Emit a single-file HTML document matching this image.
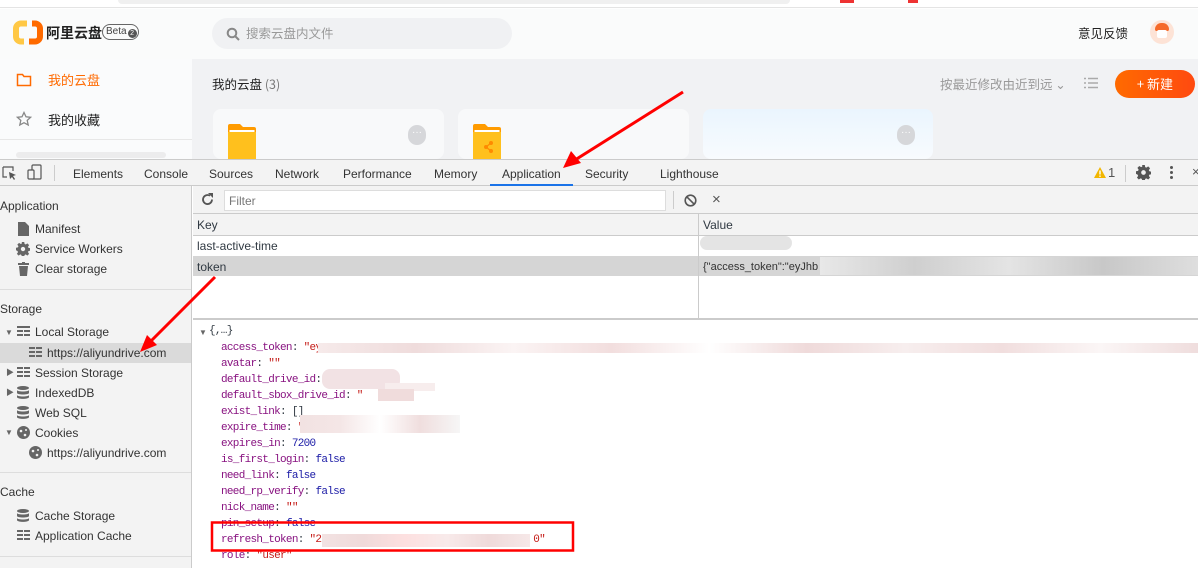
<!DOCTYPE html>
<html><head><meta charset="utf-8">
<style>
*{box-sizing:border-box;margin:0;padding:0}
body{width:1198px;height:568px;overflow:hidden;position:relative;background:#fff;font-family:"Liberation Sans","Noto Sans CJK SC",sans-serif;font-size:12px;color:#303942}
.abs{position:absolute}
.cjk{font-family:"Noto Sans CJK SC","Liberation Sans",sans-serif}
.mono{font-family:"Liberation Mono","DejaVu Sans Mono",monospace;font-size:11px;letter-spacing:-0.7px}
.tab{position:absolute;top:160px;height:27px;line-height:28px;font-size:12px;color:#333}
.si{position:absolute;left:0;height:20px;line-height:20px;font-size:12px;color:#333;white-space:nowrap}
.ln{position:absolute;left:221px;height:16px;line-height:16px;white-space:nowrap}
.k{color:#881280}
.s{color:#c41a16}
.b{color:#1a1aa6}
.blur{position:absolute;background:#f2dede}
</style></head><body>
<div class="abs" style="left:0;top:0;width:1198px;height:8px;background:#fff;border-bottom:1px solid #e4e4e4"></div>
<div class="abs" style="left:118px;top:0;width:672px;height:4px;background:#f0f0f0;border-radius:0 0 6px 6px"></div>
<div class="abs" style="left:840px;top:0;width:14px;height:3px;background:#e33"></div>
<div class="abs" style="left:908px;top:0;width:10px;height:3px;background:#e33"></div>
<div class="abs" style="left:0;top:9px;width:1198px;height:50px;background:#fafbfb;box-shadow:0 1px 2px rgba(0,0,0,.04)"></div>
<svg class="abs" style="left:13px;top:20px" width="30" height="25" viewBox="0 0 30 25">
<path d="M14 3.5H8A5 5 0 0 0 3 8.5v8a5 5 0 0 0 5 5h3" fill="none" stroke="#ffc845" stroke-width="6"/>
<path d="M16 21.5h6a5 5 0 0 0 5-5v-8a5 5 0 0 0-5-5h-3" fill="none" stroke="#ff6a00" stroke-width="6"/>
</svg>
<div class="abs cjk" style="left:46px;top:22px;font-size:14px;font-weight:bold;line-height:22px;color:#222">阿里云盘</div>
<div class="abs" style="left:102px;top:24px;width:37px;height:16px;border:1px solid #666;border-radius:8px;font-size:10px;line-height:14px;padding-left:3px;color:#444">Beta<span style="display:inline-block;width:9px;height:9px;border-radius:5px;background:#555;color:#fff;font-size:7px;line-height:9px;text-align:center;margin-left:1px;vertical-align:-1px">2</span></div>
<div class="abs" style="left:212px;top:18px;width:300px;height:31px;background:#f0f1f3;border-radius:16px"></div>
<svg class="abs" style="left:226px;top:27px" width="14" height="14"><circle cx="6" cy="6" r="4.3" stroke="#888" stroke-width="2" fill="none"/><path d="M9 9l4 4" stroke="#888" stroke-width="2"/></svg>
<div class="abs cjk" style="left:246px;top:24px;font-size:12.5px;line-height:18px;color:#999">搜索云盘内文件</div>
<div class="abs cjk" style="left:1078px;top:24px;font-size:12.5px;line-height:18px;color:#222">意见反馈</div>
<div class="abs" style="left:1150px;top:20px;width:24px;height:24px;border-radius:12px;background:#fde3d6"></div>
<div class="abs" style="left:1155px;top:23px;width:14px;height:8px;border-radius:7px 7px 2px 2px;background:#f56a2a"></div>
<div class="abs" style="left:1157px;top:30px;width:10px;height:8px;background:#fff;border-radius:2px"></div>
<div class="abs" style="left:0;top:59px;width:192px;height:100px;background:#fafbfc"></div>
<svg class="abs" style="left:16px;top:73px" width="16" height="14"><path d="M1.5 1.5h5l1.5 2h6.5v9h-13z" fill="none" stroke="#ff6a00" stroke-width="1.5"/></svg>
<div class="abs cjk" style="left:48px;top:71px;font-size:13px;line-height:18px;color:#ff6a00">我的云盘</div>
<svg class="abs" style="left:16px;top:111px" width="16" height="16"><path d="M8 1.5l2 4.3 4.6.5-3.4 3.1 1 4.6L8 11.7 3.8 14l1-4.6L1.4 6.3 6 5.8z" fill="none" stroke="#888" stroke-width="1.3"/></svg>
<div class="abs cjk" style="left:48px;top:111px;font-size:13px;line-height:18px;color:#222">我的收藏</div>
<div class="abs" style="left:0;top:139px;width:192px;height:1px;background:#e7e7e7"></div>
<div class="abs" style="left:16px;top:152px;width:150px;height:6px;background:#ececed;border-radius:3px"></div>
<div class="abs" style="left:192px;top:59px;width:1006px;height:100px;background:#f1f2f4"></div>
<div class="abs cjk" style="left:212px;top:75px;font-size:12.5px;line-height:18px;color:#222">我的云盘<span style="color:#777"> (3)</span></div>
<div class="abs cjk" style="left:940px;top:75px;font-size:12.5px;line-height:18px;color:#999">按最近修改由近到远 ⌄</div>
<svg class="abs" style="left:1084px;top:77px" width="14" height="12"><path d="M0 1.5h2M4 1.5h10M0 6h2M4 6h10M0 10.5h2M4 10.5h10" stroke="#aaa" stroke-width="1.4"/></svg>
<div class="abs cjk" style="left:1115px;top:70px;width:80px;height:28px;border-radius:14px;background:linear-gradient(90deg,#ff6a00,#ff4a10);color:#fff;font-size:13px;line-height:28px;text-align:center">+ 新建</div>
<div class="abs" style="left:213px;top:109px;width:231px;height:50px;background:#f8f9fa;border-radius:8px"></div>
<div class="abs" style="left:458px;top:109px;width:231px;height:50px;background:#f8f9fa;border-radius:8px"></div>
<div class="abs" style="left:703px;top:109px;width:230px;height:50px;background:linear-gradient(#eaf5fe,#f8fbfe);border-radius:8px"></div>
<svg class="abs" style="left:228px;top:124px" width="28" height="35"><path d="M0 2a2 2 0 0 1 2-2h10l3 3h11a2 2 0 0 1 2 2v30H0z" fill="#ff9b00"/><rect x="1.5" y="6" width="25" height="2" fill="#fff"/><rect x="0" y="8" width="28" height="27" fill="#ffc01d"/></svg>
<svg class="abs" style="left:473px;top:124px" width="28" height="35"><path d="M0 2a2 2 0 0 1 2-2h10l3 3h11a2 2 0 0 1 2 2v30H0z" fill="#ff9b00"/><rect x="1.5" y="6" width="25" height="2" fill="#fff"/><rect x="0" y="8" width="28" height="27" fill="#ffc01d"/><circle cx="13" cy="23" r="2" fill="#ff8a00"/><circle cx="18" cy="19" r="2" fill="#ff8a00"/><circle cx="18" cy="27" r="2" fill="#ff8a00"/><path d="M13 23l5-4M13 23l5 4" stroke="#ff8a00" stroke-width="1.2"/></svg>
<div class="abs" style="left:408px;top:125px;width:18px;height:20px;border-radius:9px;background:#d6d7da;color:#fff;font-size:10px;line-height:16px;text-align:center">···</div>
<div class="abs" style="left:897px;top:125px;width:18px;height:20px;border-radius:9px;background:#d6d7da;color:#fff;font-size:10px;line-height:16px;text-align:center">···</div>

<div class="abs" style="left:0;top:159px;width:1198px;height:27px;background:#f3f3f3;border-top:1px solid #cbcbcb;border-bottom:1px solid #cbcbcb"></div>
<svg class="abs" style="left:2px;top:166px" width="16" height="14"><path d="M1 1h10v4M1 1v10h4" fill="none" stroke="#555" stroke-width="1.2"/><path d="M7 6l7 3-3 1 2 3-1 1-2-3-2 2z" fill="#555"/></svg>
<svg class="abs" style="left:27px;top:164px" width="16" height="16"><rect x="5" y="1" width="9" height="14" rx="1" fill="none" stroke="#555" stroke-width="1.2"/><rect x="1" y="6" width="6" height="9" rx="1" fill="#f3f3f3" stroke="#555" stroke-width="1.2"/></svg>
<div class="abs" style="left:54px;top:165px;width:1px;height:16px;background:#ccc"></div>
<div class="tab" style="left:73px">Elements</div>
<div class="tab" style="left:144px">Console</div>
<div class="tab" style="left:209px">Sources</div>
<div class="tab" style="left:275px">Network</div>
<div class="tab" style="left:343px">Performance</div>
<div class="tab" style="left:434px">Memory</div>
<div class="tab" style="left:502px">Application</div>
<div class="abs" style="left:490px;top:184px;width:83px;height:2px;background:#1a73e8"></div>
<div class="tab" style="left:585px">Security</div>
<div class="tab" style="left:660px">Lighthouse</div>
<svg class="abs" style="left:1094px;top:167px" width="12" height="11"><path d="M6 0l6 11H0z" fill="#f2b600"/><rect x="5.3" y="3.5" width="1.4" height="4" fill="#fff"/><rect x="5.3" y="8.5" width="1.4" height="1.4" fill="#fff"/></svg>
<div class="abs" style="left:1108px;top:165px;font-size:13px;line-height:16px;color:#555">1</div>
<div class="abs" style="left:1125px;top:165px;width:1px;height:17px;background:#ccc"></div>
<svg class="abs" style="left:1136px;top:165px" width="15" height="15" viewBox="0 0 16 16"><path d="M6.6 0h2.8l.4 2.2 1.3.6 1.9-1.3 2 2-1.3 1.9.6 1.3 2.2.4v2.8l-2.2.4-.6 1.3 1.3 1.9-2 2-1.9-1.3-1.3.6-.4 2.2H6.6l-.4-2.2-1.3-.6-1.9 1.3-2-2 1.3-1.9-.6-1.3L0 9.4V6.6l2.2-.4.6-1.3-1.3-1.9 2-2 1.9 1.3 1.3-.6z" fill="#555"/><circle cx="8" cy="8" r="2.5" fill="#f3f3f3"/></svg>
<div class="abs" style="left:1170px;top:166px;width:3px;height:3px;background:#555;border-radius:2px;box-shadow:0 5px 0 #555,0 10px 0 #555"></div>
<div class="abs" style="left:1192px;top:164px;font-size:13px;color:#555">×</div>

<div class="abs" style="left:0;top:186px;width:192px;height:382px;background:#f3f3f3;border-right:1px solid #cbcbcb"></div>
<div class="si" style="top:196px;color:#333">Application</div>
<svg class="abs" style="left:18px;top:222px" width="11" height="14"><path d="M0 0h7l4 4v10H0z" fill="#666"/></svg>
<div class="si" style="left:35px;top:219px">Manifest</div>
<svg class="abs" style="left:16px;top:242px" width="14" height="14" viewBox="0 0 16 16"><path d="M6.6 0h2.8l.4 2.2 1.3.6 1.9-1.3 2 2-1.3 1.9.6 1.3 2.2.4v2.8l-2.2.4-.6 1.3 1.3 1.9-2 2-1.9-1.3-1.3.6-.4 2.2H6.6l-.4-2.2-1.3-.6-1.9 1.3-2-2 1.3-1.9-.6-1.3L0 9.4V6.6l2.2-.4.6-1.3-1.3-1.9 2-2 1.9 1.3 1.3-.6z" fill="#666"/><circle cx="8" cy="8" r="2.5" fill="#f3f3f3"/></svg>
<div class="si" style="left:35px;top:239px">Service Workers</div>
<svg class="abs" style="left:18px;top:262px" width="11" height="14"><rect x="0" y="1" width="11" height="2" fill="#666"/><rect x="4" y="0" width="3" height="2" fill="#666"/><path d="M1 4h9l-1 10H2z" fill="#666"/></svg>
<div class="si" style="left:35px;top:259px">Clear storage</div>
<div class="abs" style="left:0;top:289px;width:191px;height:1px;background:#ddd"></div>
<div class="si" style="top:299px">Storage</div>
<div class="abs" style="left:5px;top:328px;font-size:8px;color:#666">▼</div>
<svg class="abs" style="left:17px;top:326px" width="13" height="10"><path d="M0 0h13v2H0zM0 4h6v2H0zM7 4h6v2H7zM0 8h6v2H0zM7 8h6v2H7z" fill="#666"/></svg>
<div class="si" style="left:35px;top:322px">Local Storage</div>
<div class="abs" style="left:0;top:343px;width:191px;height:20px;background:#dadada"></div>
<svg class="abs" style="left:29px;top:347px" width="13" height="10"><path d="M0 0h6v2H0zM7 0h6v2H7zM0 4h6v2H0zM7 4h6v2H7zM0 8h6v2H0zM7 8h6v2H7z" fill="#666"/></svg>
<div class="si" style="left:47px;top:343px">https://aliyundrive.com</div>
<div class="abs" style="left:6px;top:367px;font-size:8px;color:#666">▶</div>
<svg class="abs" style="left:17px;top:367px" width="13" height="10"><path d="M0 0h6v2H0zM7 0h6v2H7zM0 4h6v2H0zM7 4h6v2H7zM0 8h6v2H0zM7 8h6v2H7z" fill="#666"/></svg>
<div class="si" style="left:35px;top:363px">Session Storage</div>
<div class="abs" style="left:6px;top:387px;font-size:8px;color:#666">▶</div>
<svg class="abs" style="left:17px;top:386px" width="12" height="13"><ellipse cx="6" cy="2" rx="6" ry="2" fill="#666"/><path d="M0 4c0 2 12 2 12 0v3c0 2-12 2-12 0zM0 9c0 2 12 2 12 0v2c0 2.5-12 2.5-12 0z" fill="#666"/></svg>
<div class="si" style="left:35px;top:383px">IndexedDB</div>
<svg class="abs" style="left:17px;top:406px" width="12" height="13"><ellipse cx="6" cy="2" rx="6" ry="2" fill="#666"/><path d="M0 4c0 2 12 2 12 0v3c0 2-12 2-12 0zM0 9c0 2 12 2 12 0v2c0 2.5-12 2.5-12 0z" fill="#666"/></svg>
<div class="si" style="left:35px;top:403px">Web SQL</div>
<div class="abs" style="left:5px;top:428px;font-size:8px;color:#666">▼</div>
<svg class="abs" style="left:17px;top:426px" width="13" height="13"><circle cx="6.5" cy="6.5" r="6.5" fill="#666"/><circle cx="4" cy="5" r="1.3" fill="#f3f3f3"/><circle cx="8" cy="9" r="1.3" fill="#f3f3f3"/><circle cx="9" cy="4" r="1" fill="#f3f3f3"/></svg>
<div class="si" style="left:35px;top:423px">Cookies</div>
<svg class="abs" style="left:29px;top:446px" width="13" height="13"><circle cx="6.5" cy="6.5" r="6.5" fill="#666"/><circle cx="4" cy="5" r="1.3" fill="#f3f3f3"/><circle cx="8" cy="9" r="1.3" fill="#f3f3f3"/><circle cx="9" cy="4" r="1" fill="#f3f3f3"/></svg>
<div class="si" style="left:47px;top:443px">https://aliyundrive.com</div>
<div class="abs" style="left:0;top:472px;width:191px;height:1px;background:#ddd"></div>
<div class="si" style="top:482px">Cache</div>
<svg class="abs" style="left:17px;top:509px" width="12" height="13"><ellipse cx="6" cy="2" rx="6" ry="2" fill="#666"/><path d="M0 4c0 2 12 2 12 0v3c0 2-12 2-12 0zM0 9c0 2 12 2 12 0v2c0 2.5-12 2.5-12 0z" fill="#666"/></svg>
<div class="si" style="left:35px;top:506px">Cache Storage</div>
<svg class="abs" style="left:17px;top:530px" width="13" height="10"><path d="M0 0h6v2H0zM7 0h6v2H7zM0 4h6v2H0zM7 4h6v2H7zM0 8h6v2H0zM7 8h6v2H7z" fill="#666"/></svg>
<div class="si" style="left:35px;top:526px">Application Cache</div>
<div class="abs" style="left:0;top:556px;width:191px;height:1px;background:#ddd"></div>

<div class="abs" style="left:193px;top:186px;width:1005px;height:28px;background:#f3f3f3;border-bottom:1px solid #cbcbcb"></div>
<svg class="abs" style="left:201px;top:193px" width="13" height="13"><path d="M11 6.5A4.5 4.5 0 1 1 9 2.8" fill="none" stroke="#555" stroke-width="1.8"/><path d="M7 0h5v5z" fill="#555"/></svg>
<div class="abs" style="left:224px;top:190px;width:442px;height:21px;background:#fff;border:1px solid #ddd"></div>
<div class="abs" style="left:229px;top:192px;line-height:18px;color:#777">Filter</div>
<div class="abs" style="left:673px;top:191px;width:1px;height:18px;background:#ccc"></div>
<svg class="abs" style="left:684px;top:194px" width="13" height="13"><circle cx="6.5" cy="6.5" r="5.3" fill="none" stroke="#555" stroke-width="1.6"/><path d="M2.8 2.8l7.4 7.4" stroke="#555" stroke-width="1.6"/></svg>
<div class="abs" style="left:712px;top:191px;font-size:15px;line-height:18px;color:#555">×</div>

<div class="abs" style="left:193px;top:214px;width:1005px;height:22px;background:#f3f3f3;border-bottom:1px solid #cbcbcb"></div>
<div class="abs" style="left:197px;top:218px;line-height:15px">Key</div>
<div class="abs" style="left:703px;top:218px;line-height:15px">Value</div>
<div class="abs" style="left:197px;top:238px;line-height:16px">last-active-time</div>
<div class="abs" style="left:193px;top:256px;width:1005px;height:20px;background:#d5d5d5"></div>
<div class="abs" style="left:197px;top:259px;line-height:16px">token</div>
<div class="abs" style="left:703px;top:259px;line-height:16px;font-size:11px;color:#333">{"access_token":"eyJhb</div>
<div class="abs" style="left:700px;top:236px;width:92px;height:14px;background:#ddd;border-radius:7px;opacity:.8"></div>
<div class="abs" style="left:820px;top:257px;width:378px;height:18px;background:linear-gradient(90deg,#e8e8e8,#cfcfcf,#e4e4e4,#c8c8c8,#dedede)"></div>
<div class="abs" style="left:698px;top:214px;width:1px;height:104px;background:#cbcbcb"></div>
<div class="abs" style="left:193px;top:318px;width:1005px;height:2px;background:#cbcbcb"></div>

<div class="abs" style="left:199px;top:328px;font-size:8px;color:#666">▼</div>
<div class="abs mono" style="left:209px;top:323px;line-height:16px;color:#303942">{,…}</div>
<div class="mono">
<div class="ln" style="top:340px"><span class="k">access_token</span>: <span class="s">"ey</span></div>
<div class="ln" style="top:356px"><span class="k">avatar</span>: <span class="s">""</span></div>
<div class="ln" style="top:372px"><span class="k">default_drive_id</span>:</div>
<div class="ln" style="top:388px"><span class="k">default_sbox_drive_id</span>: <span class="s">"</span></div>
<div class="ln" style="top:404px"><span class="k">exist_link</span>: []</div>
<div class="ln" style="top:420px"><span class="k">expire_time</span>: <span class="s">"</span></div>
<div class="ln" style="top:436px"><span class="k">expires_in</span>: <span class="b">7200</span></div>
<div class="ln" style="top:452px"><span class="k">is_first_login</span>: <span class="b">false</span></div>
<div class="ln" style="top:468px"><span class="k">need_link</span>: <span class="b">false</span></div>
<div class="ln" style="top:484px"><span class="k">need_rp_verify</span>: <span class="b">false</span></div>
<div class="ln" style="top:500px"><span class="k">nick_name</span>: <span class="s">""</span></div>
<div class="ln" style="top:516px"><span class="k">pin_setup</span>: <span class="b">false</span></div>
<div class="ln" style="top:532px"><span class="k">refresh_token</span>: <span class="s">"25</span><span style="display:inline-block;width:206px"></span><span class="s">0"</span></div>
<div class="ln" style="top:548px"><span class="k">role</span>: <span class="s">"user"</span></div>
</div>
<div class="blur" style="left:318px;top:343px;width:880px;height:10px;background:linear-gradient(90deg,#f6eaea,#efdcdc,#fbf4f4,#f2dede,#fff,#efdada,#f7eeee,#f1dede,#fbf6f6,#efdddd)"></div>
<div class="blur" style="left:322px;top:369px;width:78px;height:20px;border-radius:8px;background:#f2e2e4"></div>
<div class="blur" style="left:385px;top:383px;width:50px;height:8px;background:#f7eded"></div>
<div class="blur" style="left:378px;top:389px;width:36px;height:12px;background:#f0dcdc"></div>
<div class="blur" style="left:300px;top:415px;width:160px;height:18px;background:linear-gradient(90deg,#f2e2e2,#f4e6e6,#fff,#f0dede,#f6f6f6)"></div>
<div class="blur" style="left:322px;top:534px;width:208px;height:13px;background:linear-gradient(90deg,#f2e2e2,#f0dada,#fde0e0,#f8eaea,#efdada,#f6e8e8)"></div>

<svg class="abs" style="left:0;top:0" width="1198" height="568">
<rect x="212" y="522.5" width="361" height="28" fill="none" stroke="#f00" stroke-width="2.5"/>
<path d="M683 92L575 160" stroke="#f00" stroke-width="3"/>
<path d="M563 168l8-17 10 12z" fill="#f00"/>
<path d="M215 277L150 342" stroke="#f00" stroke-width="3"/>
<path d="M140 352l7-17 10 10z" fill="#f00"/>
</svg>
</body></html>
